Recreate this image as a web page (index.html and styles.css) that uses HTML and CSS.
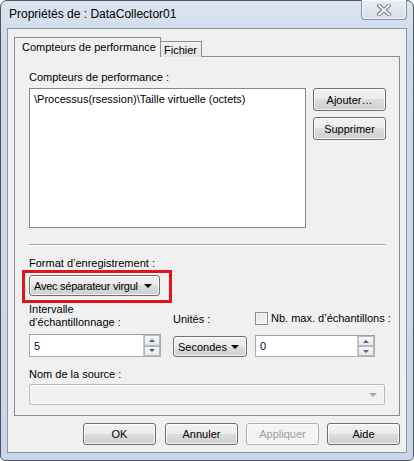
FILE: index.html
```html
<!DOCTYPE html>
<html lang="fr">
<head>
<meta charset="utf-8">
<link rel="stylesheet" href="styles.css">
</head>
<body>
<div class="window">
  <div class="titlebar">
    <span class="title">Propriétés de : DataCollector01</span>
    <div class="close">
      <svg width="14" height="12" viewBox="0 0 14 12">
        <path d="M2 1.5 L12 10.5 M12 1.5 L2 10.5" stroke="#6f7782" stroke-width="4" stroke-linecap="square"/>
        <path d="M2 1.5 L12 10.5 M12 1.5 L2 10.5" stroke="#ffffff" stroke-width="2" stroke-linecap="square"/>
      </svg>
    </div>
  </div>
  <div class="client">
    <div class="tabs">
      <div class="tab active">Compteurs de performance</div>
      <div class="tab">Fichier</div>
    </div>
    <div class="panel">
      <div class="label">Compteurs de performance :</div>
      <div class="counters">
        <div class="listbox"><div class="item">\Processus(rsession)\Taille virtuelle (octets)</div></div>
        <div class="side-buttons">
          <div class="btn">Ajouter…</div>
          <div class="btn">Supprimer</div>
        </div>
      </div>
      <div class="separator"></div>
      <div class="label fmt-label">Format d’enregistrement :</div>
      <div class="highlight">
        <div class="combo fmt-combo"><span class="fmt-text">Avec séparateur virgul</span><span class="arrow"></span></div>
      </div>
      <div class="params">
        <div class="plabel interval">Intervalle<br>d’échantillonnage :</div>
        <div class="plabel units">Unités :</div>
        <div class="plabel maxcheck"><span class="checkbox"></span><span>Nb. max. d’échantillons :</span></div>
        <div class="spin spin1">
          <span class="value">5</span>
          <div class="spin-btns">
            <div class="sbtn"><span class="up"></span></div>
            <div class="sbtn"><span class="down"></span></div>
          </div>
        </div>
        <div class="combo units-combo"><span>Secondes</span><span class="arrow"></span></div>
        <div class="spin spin2">
          <span class="value">0</span>
          <div class="spin-btns">
            <div class="sbtn"><span class="up"></span></div>
            <div class="sbtn"><span class="down"></span></div>
          </div>
        </div>
      </div>
      <div class="label source-label">Nom de la source :</div>
      <div class="source-combo"><span class="arrow dis"></span></div>
    </div>
    <div class="footer">
      <div class="btn fbtn">OK</div>
      <div class="btn fbtn">Annuler</div>
      <div class="btn fbtn disabled">Appliquer</div>
      <div class="btn fbtn">Aide</div>
    </div>
  </div>
</div>
</body>
</html>
```

FILE: styles.css
```css
* { box-sizing: border-box; }
html, body { margin: 0; padding: 0; background: #ffffff; }
body {
  font-family: "Liberation Sans", Arial, sans-serif;
  font-size: 11px;
  color: #000;
  width: 414px;
  height: 461px;
  overflow: hidden;
}
.window {
  width: 414px;
  height: 461px;
  border: 1px solid #4d535b;
  border-radius: 7px 7px 5px 5px;
  background: linear-gradient(to bottom, #dbe5f1 0px, #cfdbea 40px, #c8d6e7 100%);
  padding: 0 6px 7px 6px;
  display: flex;
  flex-direction: column;
}
.titlebar {
  height: 27px;
  flex: none;
  position: relative;
  display: flex;
  align-items: center;
}
.title {
  margin-left: 2px;
  margin-top: -1px;
  font-size: 12px;
  color: #000;
}
.close {
  position: absolute;
  right: 0;
  top: -1px;
  width: 46px;
  height: 20px;
  border: 1px solid #8590a0;
  border-top: none;
  border-radius: 0 0 4px 4px;
  background: linear-gradient(to bottom, #e9eef5, #d5dfeb);
  box-shadow: inset 0 0 0 1px rgba(255,255,255,0.6);
  display: flex;
  align-items: center;
  justify-content: center;
}
.client {
  flex: 1;
  border: 1px solid #8d97a3;
  background: #f0f0f0;
  padding: 8px 6px 6px 6px;
  display: flex;
  flex-direction: column;
}
.tabs {
  display: flex;
  align-items: flex-end;
  height: 20px;
  margin-bottom: -1px;
  position: relative;
  z-index: 1;
}
.tab {
  height: 16px;
  padding: 0 4px 0 3px;
  border: 1px solid #898c95;
  border-bottom: none;
  border-left: none;
  background: linear-gradient(to bottom, #f2f2f2, #e3e3e3);
  line-height: 16px;
  white-space: nowrap;
}
.tab.active {
  height: 20px;
  width: 147px;
  border-left: 1px solid #898c95;
  border-right: 1px solid #898c95;
  background: #f0f0f0;
  padding: 0 0 0 7px;
  line-height: 18px;
}
.panel {
  height: 360px;
  border: 1px solid #898c95;
  background: #f0f0f0;
  padding: 13px 11px 0 14px;
  display: flex;
  flex-direction: column;
  align-items: flex-start;
}
.label {
  line-height: 14px;
  height: 14px;
}
.counters {
  margin-top: 4px;
  display: flex;
  gap: 7px;
}
.listbox {
  width: 277px;
  height: 140px;
  border: 1px solid #828790;
  background: #fff;
  padding: 3px 4px;
}
.item {
  line-height: 14px;
  white-space: nowrap;
}
.side-buttons {
  display: flex;
  flex-direction: column;
  gap: 6px;
}
.btn {
  width: 73px;
  height: 23px;
  border: 1px solid #707070;
  border-radius: 3px;
  background: linear-gradient(to bottom, #f2f2f2 0%, #ebebeb 50%, #dddddd 50%, #cfcfcf 100%);
  box-shadow: inset 0 0 0 1px rgba(255,255,255,0.75);
  display: flex;
  align-items: center;
  justify-content: center;
  line-height: 14px;
}
.btn.disabled {
  border-color: #adb2b5;
  background: #f4f4f4;
  color: #9c9c9c;
}
.separator {
  margin-top: 16px;
  width: 357px;
  height: 2px;
  border-top: 1px solid #a0a0a0;
  border-bottom: 1px solid #ffffff;
}
.fmt-label {
  margin-top: 10px;
}
.highlight {
  margin-left: -7px;
  border: 3px solid #e3131c;
  padding: 2px 9px 4px 4px;
}
.combo {
  height: 21px;
  border: 1px solid #707070;
  border-radius: 3px;
  background: linear-gradient(to bottom, #f2f2f2 0%, #ebebeb 50%, #dddddd 50%, #cfcfcf 100%);
  box-shadow: inset 0 0 0 1px rgba(255,255,255,0.75);
  display: flex;
  align-items: center;
  justify-content: space-between;
  padding: 0 7px 0 4px;
  white-space: nowrap;
}
.fmt-combo {
  width: 131px;
}
.fmt-text {
  letter-spacing: -0.25px;
}
.arrow {
  width: 0;
  height: 0;
  border-left: 4px solid transparent;
  border-right: 4px solid transparent;
  border-top: 4px solid #000;
  margin-top: 1px;
  flex: none;
}
.arrow.dis {
  border-top-color: #a8a8a8;
}
.params {
  display: grid;
  grid-template-columns: 132px 94px 120px;
  column-gap: 0;
  grid-template-rows: 26px 24px;
  row-gap: 5px;
}
.plabel {
  line-height: 13px;
}
.interval {
  grid-column: 1;
  grid-row: 1;
}
.units {
  grid-column: 2;
  grid-row: 1;
  align-self: end;
  margin-left: 12px;
  margin-bottom: 3px;
}
.maxcheck {
  grid-column: 3;
  grid-row: 1;
  margin-top: 5px;
  display: flex;
  align-items: center;
  gap: 3px;
  white-space: nowrap;
}
.checkbox {
  width: 13px;
  height: 13px;
  border: 1px solid #8f8f8f;
  background: linear-gradient(135deg, #dcdcdc, #fdfdfd);
  box-shadow: inset 0 0 0 1px #f4f4f4;
  flex: none;
}
.spin {
  height: 23px;
  border: 1px solid #abadb3;
  border-top-color: #9ea0a6;
  background: #fff;
  display: flex;
  align-items: center;
  justify-content: space-between;
  padding-left: 4px;
}
.spin1 {
  grid-column: 1;
  grid-row: 2;
  width: 132px;
}
.spin2 {
  grid-column: 3;
  grid-row: 2;
  width: 120px;
  margin-top: 1px;
  height: 22px;
}
.value {
  color: #0a0a3a;
}
.spin-btns {
  display: flex;
  flex-direction: column;
  height: 100%;
  width: 17px;
  border-left: 1px solid #c8c8c8;
}
.sbtn {
  flex: 1;
  border: 1px solid #b5b8bd;
  background: linear-gradient(to bottom, #fafafa, #e6e6e6);
  display: flex;
  align-items: center;
  justify-content: center;
}
.up {
  width: 0; height: 0;
  border-left: 3px solid transparent;
  border-right: 3px solid transparent;
  border-bottom: 3px solid #4b5d86;
}
.down {
  width: 0; height: 0;
  border-left: 3px solid transparent;
  border-right: 3px solid transparent;
  border-top: 3px solid #4b5d86;
}
.units-combo {
  grid-column: 2;
  grid-row: 2;
  margin-left: 12px;
  margin-top: 2px;
  width: 74px;
  padding-left: 4px;
}
.source-label {
  margin-top: 9px;
}
.source-combo {
  margin-top: 3px;
  width: 356px;
  height: 21px;
  border: 1px solid #b9bcc1;
  border-radius: 2px;
  background: #f0f0f0;
  box-shadow: inset 0 0 0 1px #f7f7f7;
  display: flex;
  align-items: center;
  justify-content: flex-end;
  padding-right: 7px;
}
.footer {
  margin-top: 7px;
  display: flex;
  justify-content: flex-end;
  gap: 9px;
}
.fbtn {
  height: 22px;
}
.fbtn:nth-child(3) { margin-left: -1px; margin-right: -1px; }
```
